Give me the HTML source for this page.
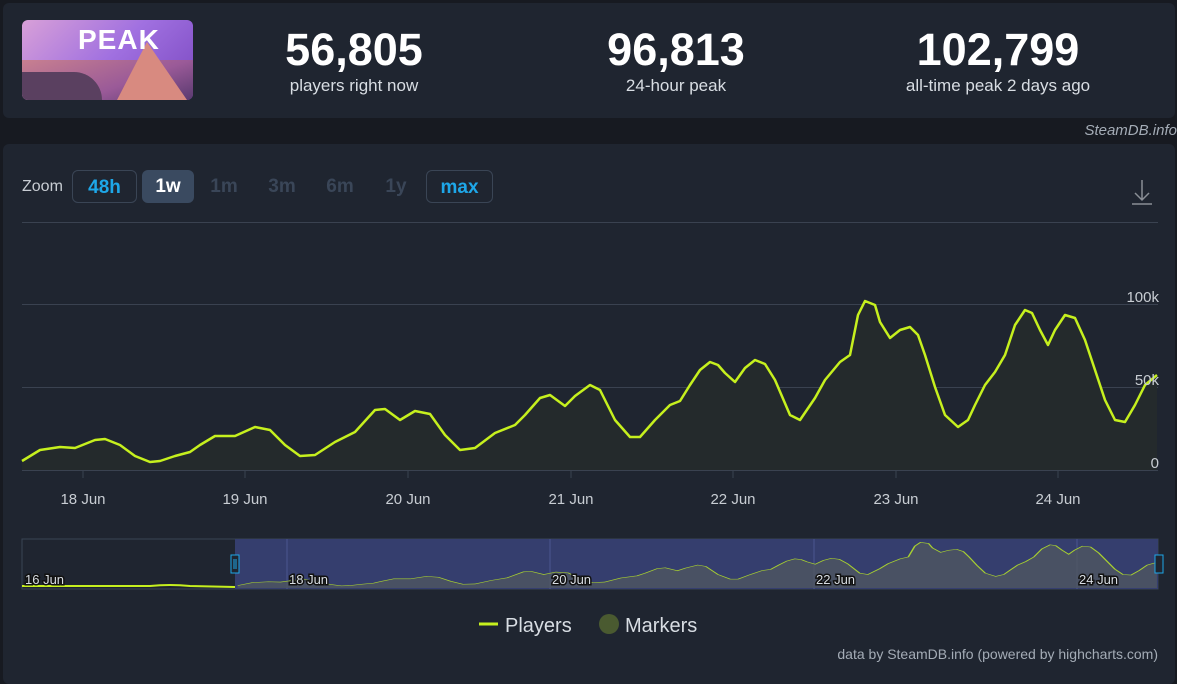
<!DOCTYPE html><html><head><style>
body{margin:0;width:1177px;height:671px;background:#171a21;font-family:"Liberation Sans",sans-serif;overflow:hidden;position:relative}
.p{position:absolute;background:#1f2530;border-radius:6px}
.num{position:absolute;text-align:center;color:#fff;width:300px}
.num b{display:block;font-size:45px;line-height:48px}
.num span{display:block;font-size:17px;color:#d8dde3;margin-top:2px}
.btn{position:absolute;top:170px;height:33px;line-height:33px;text-align:center;font-weight:bold;font-size:19px;border-radius:6px;box-sizing:border-box}
</style></head><body>
<div class="p" style="left:3px;top:3px;width:1172px;height:115px"></div>
<div style="position:absolute;left:22px;top:20px;width:171px;height:80px;border-radius:6px;background:linear-gradient(135deg,#d8a0d8,#a070e0 50%,#7a48c0);overflow:hidden">
<div style="position:absolute;left:0;bottom:0;width:171px;height:40px;background:linear-gradient(160deg,#c88090,#9a5a98 60%,#5a3a70)"></div>
<div style="position:absolute;left:95px;top:22px;width:0;height:0;border-left:30px solid transparent;border-right:40px solid transparent;border-bottom:58px solid #d88a80"></div>
<div style="position:absolute;left:0;bottom:0;width:80px;height:28px;background:#5a4060;border-radius:0 30px 0 0"></div>
<div style="position:absolute;left:56px;top:4px;color:#fff;font-weight:bold;font-size:28px;letter-spacing:1px">PEAK</div></div>
<div class="num" style="left:204px;top:26px"><b>56,805</b><span>players right now</span></div>
<div class="num" style="left:526px;top:26px"><b>96,813</b><span>24-hour peak</span></div>
<div class="num" style="left:848px;top:26px"><b>102,799</b><span>all-time peak 2 days ago</span></div>
<div style="position:absolute;right:0;top:122px;font-style:italic;color:#a4acb6;font-size:15px">SteamDB.info</div>
<div class="p" style="left:3px;top:144px;width:1172px;height:540px"></div>
<div style="position:absolute;left:22px;top:178px;color:#c8cdd3;font-size:16px">Zoom</div>
<div class="btn" style="left:72px;width:65px;border:1px solid #3a4555;color:#1ea7e8">48h</div>
<div class="btn" style="left:142px;width:52px;background:#3a4a60;color:#fff">1w</div>
<div class="btn" style="left:200px;width:48px;color:#3a4658">1m</div>
<div class="btn" style="left:258px;width:48px;color:#3a4658">3m</div>
<div class="btn" style="left:316px;width:48px;color:#3a4658">6m</div>
<div class="btn" style="left:374px;width:44px;color:#3a4658">1y</div>
<div class="btn" style="left:426px;width:67px;border:1px solid #3a4555;color:#1ea7e8">max</div>
<svg style="position:absolute;left:0;top:0" width="1177" height="671">
<g stroke="#8a8f96" stroke-width="1.5" fill="none"><path d="M1142 180V200M1135 193L1142 200L1149 193M1132 204H1152"/></g>
<g stroke="#3a4250" stroke-width="1"><path d="M22 222.5H1158M22 304.5H1158M22 387.5H1158M22 470.5H1158"/></g>
<g stroke="#3a4250"><path d="M83 470v8M245 470v8M408 470v8M571 470v8M733 470v8M896 470v8M1058 470v8"/></g>
<g fill="#c8cdd3" font-size="15" text-anchor="middle"><text x="83" y="504">18 Jun</text><text x="245" y="504">19 Jun</text><text x="408" y="504">20 Jun</text><text x="571" y="504">21 Jun</text><text x="733" y="504">22 Jun</text><text x="896" y="504">23 Jun</text><text x="1058" y="504">24 Jun</text></g>
<defs>
<polyline id="L" points="22,461 40,450 60,447 75,448 95,440 105,439 120,445 135,456 150,462 160,461 175,456 190,452 200,445 215,436 235,436 255,427 270,430 285,445 300,456 315,455 335,442 355,432 375,410 385,409 400,420 415,411 430,414 445,435 460,450 475,448 495,433 515,425 525,415 540,398 550,395 565,406 575,396 590,385 600,390 615,420 630,437 640,437 655,420 670,405 680,401 690,385 700,370 710,362 718,365 725,373 735,382 745,368 755,360 765,364 775,380 790,415 800,420 815,398 825,380 840,362 850,355 858,315 865,301 875,305 880,322 890,338 900,330 910,327 918,335 925,355 935,387 945,415 958,427 968,420 975,405 985,385 995,372 1005,355 1015,325 1025,310 1032,313 1040,330 1048,345 1055,330 1065,315 1075,318 1085,340 1095,370 1105,400 1115,420 1125,422 1135,405 1145,385 1157,375"/>
<polygon id="A" points="22,470 22,461 40,450 60,447 75,448 95,440 105,439 120,445 135,456 150,462 160,461 175,456 190,452 200,445 215,436 235,436 255,427 270,430 285,445 300,456 315,455 335,442 355,432 375,410 385,409 400,420 415,411 430,414 445,435 460,450 475,448 495,433 515,425 525,415 540,398 550,395 565,406 575,396 590,385 600,390 615,420 630,437 640,437 655,420 670,405 680,401 690,385 700,370 710,362 718,365 725,373 735,382 745,368 755,360 765,364 775,380 790,415 800,420 815,398 825,380 840,362 850,355 858,315 865,301 875,305 880,322 890,338 900,330 910,327 918,335 925,355 935,387 945,415 958,427 968,420 975,405 985,385 995,372 1005,355 1015,325 1025,310 1032,313 1040,330 1048,345 1055,330 1065,315 1075,318 1085,340 1095,370 1105,400 1115,420 1125,422 1135,405 1145,385 1157,375 1157,470"/>
</defs>
<use href="#A" fill="#242a2c"/>
<use href="#L" fill="none" stroke="#c6f01e" stroke-width="2.5" stroke-linejoin="round"/>
<g fill="#c8cdd3" font-size="15" text-anchor="end"><text x="1159" y="302">100k</text><text x="1159" y="385">50k</text><text x="1159" y="468">0</text></g>
<rect x="22" y="539" width="1136" height="50" fill="#1f2530" stroke="#3a4555"/>
<rect x="235" y="539" width="923" height="50" fill="#353e6e"/>
<g stroke="#4a5590"><path d="M287 539v50M550 539v50M814 539v50M1077 539v50"/></g>
<g transform="matrix(0.81 0 0 0.27 219.8 461.1)"><use href="#A" fill="#4f5660" fill-opacity="0.8"/><use href="#L" fill="none" stroke="#a8d030" stroke-width="2" vector-effect="non-scaling-stroke"/></g>
<path d="M22 586H150Q170 584 190 586L235 587" stroke="#c6f01e" stroke-width="2" fill="none"/>
<g font-size="13" fill="#d8dde3" stroke="#111" stroke-width="3" paint-order="stroke"><text x="25" y="584">16 Jun</text><text x="289" y="584">18 Jun</text><text x="552" y="584">20 Jun</text><text x="816" y="584">22 Jun</text><text x="1079" y="584">24 Jun</text></g>
<rect x="231" y="555" width="8" height="18" fill="#1f2530" stroke="#1ea7e8"/><path d="M234 559v10M236 559v10" stroke="#1ea7e8"/>
<rect x="1155" y="555" width="8" height="18" fill="#1f2530" stroke="#1ea7e8"/>
<path d="M479 624H498" stroke="#c6f01e" stroke-width="3"/>
<text x="505" y="632" font-size="20" fill="#d8dde3">Players</text>
<circle cx="609" cy="624" r="10" fill="#4a5a30"/>
<text x="625" y="632" font-size="20" fill="#d8dde3">Markers</text>
<text x="1158" y="659" font-size="14" fill="#a4acb6" text-anchor="end">data by SteamDB.info (powered by highcharts.com)</text>
</svg>
</body></html>
